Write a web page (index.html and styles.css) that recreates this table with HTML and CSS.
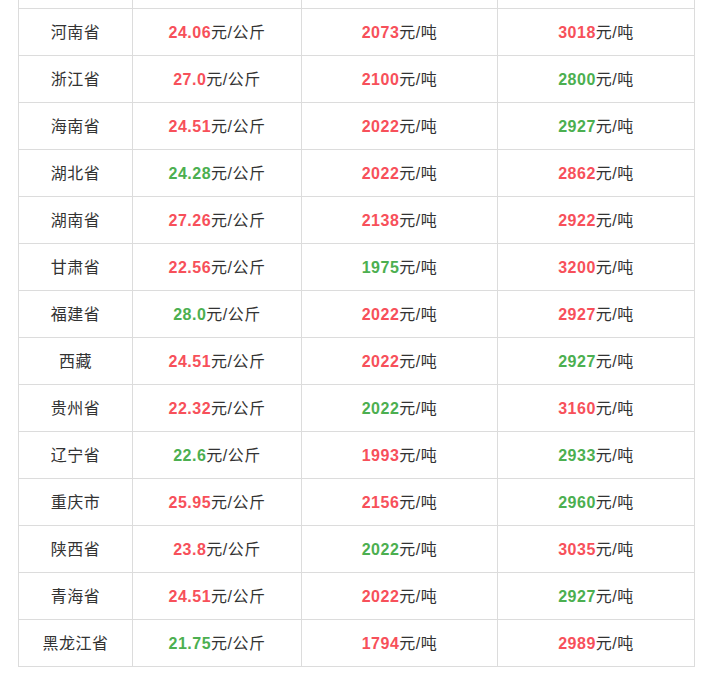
FILE: index.html
```html
<!DOCTYPE html>
<html lang="zh">
<head>
<meta charset="utf-8">
<link rel="stylesheet" href="styles.css">
</head>
<body>
<div class="wrap">
<table class="price">
<colgroup><col class="c1"><col class="c2"><col class="c3"><col class="c4"></colgroup>
<tbody>
<tr class="cut"><td></td><td></td><td></td><td></td></tr>
<tr><td>河南省</td><td><b class="r">24.06</b>元/公斤</td><td><b class="r">2073</b>元/吨</td><td><b class="r">3018</b>元/吨</td></tr>
<tr><td>浙江省</td><td><b class="r">27.0</b>元/公斤</td><td><b class="r">2100</b>元/吨</td><td><b class="g">2800</b>元/吨</td></tr>
<tr><td>海南省</td><td><b class="r">24.51</b>元/公斤</td><td><b class="r">2022</b>元/吨</td><td><b class="g">2927</b>元/吨</td></tr>
<tr><td>湖北省</td><td><b class="g">24.28</b>元/公斤</td><td><b class="r">2022</b>元/吨</td><td><b class="r">2862</b>元/吨</td></tr>
<tr><td>湖南省</td><td><b class="r">27.26</b>元/公斤</td><td><b class="r">2138</b>元/吨</td><td><b class="r">2922</b>元/吨</td></tr>
<tr><td>甘肃省</td><td><b class="r">22.56</b>元/公斤</td><td><b class="g">1975</b>元/吨</td><td><b class="r">3200</b>元/吨</td></tr>
<tr><td>福建省</td><td><b class="g">28.0</b>元/公斤</td><td><b class="r">2022</b>元/吨</td><td><b class="r">2927</b>元/吨</td></tr>
<tr><td>西藏</td><td><b class="r">24.51</b>元/公斤</td><td><b class="r">2022</b>元/吨</td><td><b class="g">2927</b>元/吨</td></tr>
<tr><td>贵州省</td><td><b class="r">22.32</b>元/公斤</td><td><b class="g">2022</b>元/吨</td><td><b class="r">3160</b>元/吨</td></tr>
<tr><td>辽宁省</td><td><b class="g">22.6</b>元/公斤</td><td><b class="r">1993</b>元/吨</td><td><b class="g">2933</b>元/吨</td></tr>
<tr><td>重庆市</td><td><b class="r">25.95</b>元/公斤</td><td><b class="r">2156</b>元/吨</td><td><b class="g">2960</b>元/吨</td></tr>
<tr><td>陕西省</td><td><b class="r">23.8</b>元/公斤</td><td><b class="g">2022</b>元/吨</td><td><b class="r">3035</b>元/吨</td></tr>
<tr><td>青海省</td><td><b class="r">24.51</b>元/公斤</td><td><b class="r">2022</b>元/吨</td><td><b class="g">2927</b>元/吨</td></tr>
<tr><td>黑龙江省</td><td><b class="g">21.75</b>元/公斤</td><td><b class="r">1794</b>元/吨</td><td><b class="r">2989</b>元/吨</td></tr>
</tbody>
</table>
</div>
</body>
</html>
```
FILE: styles.css
```css
html, body {
  margin: 0;
  padding: 0;
  background: #fff;
}
.wrap {
  padding: 0 0 0 18px;
}
.price {
  border-collapse: collapse;
  table-layout: fixed;
  width: 676px;
  font-family: "Liberation Sans", Arial, "Noto Sans CJK SC", sans-serif;
  font-size: 16px;
  letter-spacing: 0.5px;
  color: #333;
}
.c1 { width: 114px; }
.c2 { width: 169px; }
.c3 { width: 196px; }
.c4 { width: 197px; }
.price td {
  border: 1px solid #dcdcdc;
  height: 44px;
  padding: 2px 0 0;
  text-align: center;
  vertical-align: middle;
  line-height: 20px;
}
.price tr.cut td {
  height: 8px;
  padding: 0;
  border-top: none;
}
.price b {
  font-weight: bold;
}
.r { color: #f7505a; }
.g { color: #4caf50; }
```
